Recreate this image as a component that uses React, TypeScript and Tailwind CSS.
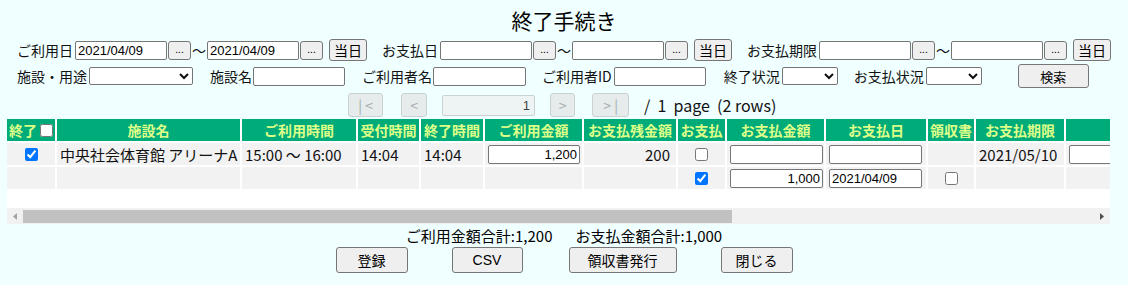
import React from 'react';

const jp = "font-['Noto_Sans_CJK_JP',sans-serif]";
const latin = "font-['Liberation_Sans',Arial,sans-serif]";
const inputCls = `h-[19px] border border-[#767676] rounded-[2px] bg-white px-[2px] text-[13px] text-black ${latin} outline-none`;
const btnCls = "bg-[#efefef] border border-[#767676] rounded-[3px] text-black flex items-center justify-center";
const selectCls = "h-[18px] border border-[#767676] rounded-[2px] bg-white text-[13px] outline-none";

const DotButton = () => (
  <button className={`${btnCls} w-[23px] h-[19px] ml-[1px] text-[10px] leading-none text-[#333] rounded-[2px] pb-[3px]`}>
    ...
  </button>
);

const DateRange = ({label, from, to, className}: {label: string; from?: string; to?: string; className?: string}) => (
  <div className={`flex items-center ${className ?? ''}`}>
    <span>{label}</span>
    <input className={`${inputCls} w-[92px] ml-[2px]`} defaultValue={from} readOnly/>
    <DotButton/>
    <span className="w-[16px] text-center">〜</span>
    <input className={`${inputCls} w-[92px]`} defaultValue={to} readOnly/>
    <DotButton/>
    <button className={`${btnCls} w-[38px] h-[22px] ml-[6px] text-[14px]`}>当日</button>
  </div>
);

const cols = [
  {w: 'w-[50px]', label: '終了'},
  {w: 'w-[185px]', label: '施設名'},
  {w: 'w-[116px]', label: 'ご利用時間'},
  {w: 'w-[63px]', label: '受付時間'},
  {w: 'w-[64px]', label: '終了時間'},
  {w: 'w-[99px]', label: 'ご利用金額'},
  {w: 'w-[94px]', label: 'お支払残金額'},
  {w: 'w-[49px]', label: 'お支払'},
  {w: 'w-[99px]', label: 'お支払金額'},
  {w: 'w-[102px]', label: 'お支払日'},
  {w: 'w-[48px]', label: '領収書'},
  {w: 'w-[90px]', label: 'お支払期限'},
  {w: 'w-[130px]', label: ''},
];

const Cell = ({children, className}: {children?: React.ReactNode; className?: string}) => (
  <td className="p-0 border-r-2 border-b-2 border-white bg-[#f2f2f2]">
    <div className={`h-[22px] flex items-center px-[3px] whitespace-nowrap ${className ?? ''}`}>{children}</div>
  </td>
);

const Check = ({checked}: {checked?: boolean}) => (
  <input type="checkbox" className="w-[13px] h-[13px]" defaultChecked={checked}/>
);

const PagerBtn = ({children, className}: {children: React.ReactNode; className?: string}) => (
  <button className={`h-[24px] bg-[#e6ebeb] border border-[#c9d1d1] rounded-[3px] text-[#a3acac] text-[14px] flex items-center justify-center ${className ?? ''}`}>
    {children}
  </button>
);

export default function App() {
  return (
    <div className={`w-full h-[285px] bg-[#f0ffff] text-[#111] text-[14px] ${jp} overflow-hidden`}>
      <h1 className="h-[38px] pt-[6px] text-center text-[21px] leading-[28px] text-black">終了手続き</h1>

      <div className="h-[24px] flex items-center pl-[17px] leading-none">
        <DateRange label="ご利用日" from="2021/04/09" to="2021/04/09"/>
        <DateRange label="お支払日" className="ml-[15px]"/>
        <DateRange label="お支払期限" className="ml-[15px]"/>
      </div>

      <div className="h-[26px] mt-[1px] flex items-center pl-[17px] leading-none">
        <span>施設・用途</span>
        <select className={`${selectCls} w-[104px] ml-[2px]`}><option></option></select>
        <span className="ml-[17px]">施設名</span>
        <input className={`${inputCls} w-[92px] ml-[1px]`} readOnly/>
        <span className="ml-[17px]">ご利用者名</span>
        <input className={`${inputCls} w-[93px] ml-[1px]`} readOnly/>
        <span className="ml-[16px]">ご利用者ID</span>
        <input className={`${inputCls} w-[92px] ml-[2px]`} readOnly/>
        <span className="ml-[18px]">終了状況</span>
        <select className={`${selectCls} w-[56px] ml-[2px]`}><option></option></select>
        <span className="ml-[16px]">お支払状況</span>
        <select className={`${selectCls} w-[56px] ml-[2px]`}><option></option></select>
        <button className={`${btnCls} w-[71px] h-[24px] ml-[36px] text-[13px]`}>検索</button>
      </div>

      <div className="h-[26px] mt-[3px] flex items-center justify-center leading-none">
        <PagerBtn className="w-[35px]">|&nbsp;&lt;</PagerBtn>
        <PagerBtn className="w-[26px] ml-[18px]">&lt;</PagerBtn>
        <input
          className={`h-[21px] w-[93px] ml-[15px] border border-[#c9d1d1] rounded-[2px] bg-[#eef3f3] text-right pr-[4px] text-[13px] text-[#444] ${latin}`}
          defaultValue="1" readOnly/>
        <PagerBtn className="w-[25px] ml-[15px]">&gt;</PagerBtn>
        <PagerBtn className="w-[37px] ml-[17px]">&gt;&nbsp;|</PagerBtn>
        <span className="ml-[15px] text-[16px] whitespace-pre">/  1  page  (2 rows) </span>
      </div>

      <div className="ml-[7px] w-[1103px] mt-[1px]">
        <div className="h-[89px] bg-white overflow-hidden">
          <table className="table-fixed border-separate border-spacing-0 w-[1189px] text-[15px] leading-none">
            <colgroup>
              {cols.map((c, i) => <col key={i} className={c.w}/>)}
            </colgroup>
            <thead>
              <tr>
                {cols.map((c, i) => (
                  <th key={i} className="p-0 border-r-2 border-b-2 border-white bg-[#00ab7a]">
                    <div className="h-[22px] flex items-center justify-center gap-[3px] text-[14px] font-bold text-[#ddff88] whitespace-nowrap">
                      {c.label}
                      {i === 0 && <Check/>}
                    </div>
                  </th>
                ))}
              </tr>
            </thead>
            <tbody>
              <tr>
                <Cell className="justify-center"><Check checked/></Cell>
                <Cell>中央社会体育館 アリーナA</Cell>
                <Cell className="whitespace-pre">15:00 ～ 16:00</Cell>
                <Cell>14:04</Cell>
                <Cell>14:04</Cell>
                <Cell><input className={`${inputCls} w-[92px] text-right`} defaultValue="1,200" readOnly/></Cell>
                <Cell className="justify-end pr-[6px]">200</Cell>
                <Cell className="justify-center"><Check/></Cell>
                <Cell><input className={`${inputCls} w-[93px] text-right`} readOnly/></Cell>
                <Cell><input className={`${inputCls} w-[93px]`} readOnly/></Cell>
                <Cell/>
                <Cell>2021/05/10</Cell>
                <Cell><input className={`${inputCls} w-[93px]`} readOnly/></Cell>
              </tr>
              <tr>
                <Cell/>
                <Cell/>
                <Cell/>
                <Cell/>
                <Cell/>
                <Cell/>
                <Cell/>
                <Cell className="justify-center"><Check checked/></Cell>
                <Cell><input className={`${inputCls} w-[93px] text-right`} defaultValue="1,000" readOnly/></Cell>
                <Cell><input className={`${inputCls} w-[93px]`} defaultValue="2021/04/09" readOnly/></Cell>
                <Cell className="justify-center"><Check/></Cell>
                <Cell/>
                <Cell/>
              </tr>
            </tbody>
          </table>
        </div>
        <div className="h-[16px] bg-[#f1f1f1] flex items-center">
          <div className="w-[16px] h-full flex items-center justify-center">
            <svg width="4" height="7" viewBox="0 0 4 7"><path d="M4 0 L0 3.5 L4 7 Z" fill="#a3a3a3"/></svg>
          </div>
          <div className="w-[709px] h-[13px] bg-[#c1c1c1]"/>
          <div className="flex-1"/>
          <div className="w-[16px] h-full flex items-center justify-center">
            <svg width="4" height="7" viewBox="0 0 4 7"><path d="M0 0 L4 3.5 L0 7 Z" fill="#505050"/></svg>
          </div>
        </div>
      </div>

      <div className="mt-[4px] h-[16px] flex justify-center gap-[23px] text-[15px] leading-[16px] text-black">
        <span>ご利用金額合計:1,200</span>
        <span>お支払金額合計:1,000</span>
      </div>

      <div className="mt-[3px] flex justify-center text-[14px] leading-none">
        <button className={`${btnCls} w-[72px] h-[26px]`}>登録</button>
        <button className={`${btnCls} w-[71px] h-[26px] ml-[44px] ${latin}`}>CSV</button>
        <button className={`${btnCls} w-[108px] h-[26px] ml-[46px]`}>領収書発行</button>
        <button className={`${btnCls} w-[72px] h-[26px] ml-[44px]`}>閉じる</button>
      </div>
    </div>
  );
}
